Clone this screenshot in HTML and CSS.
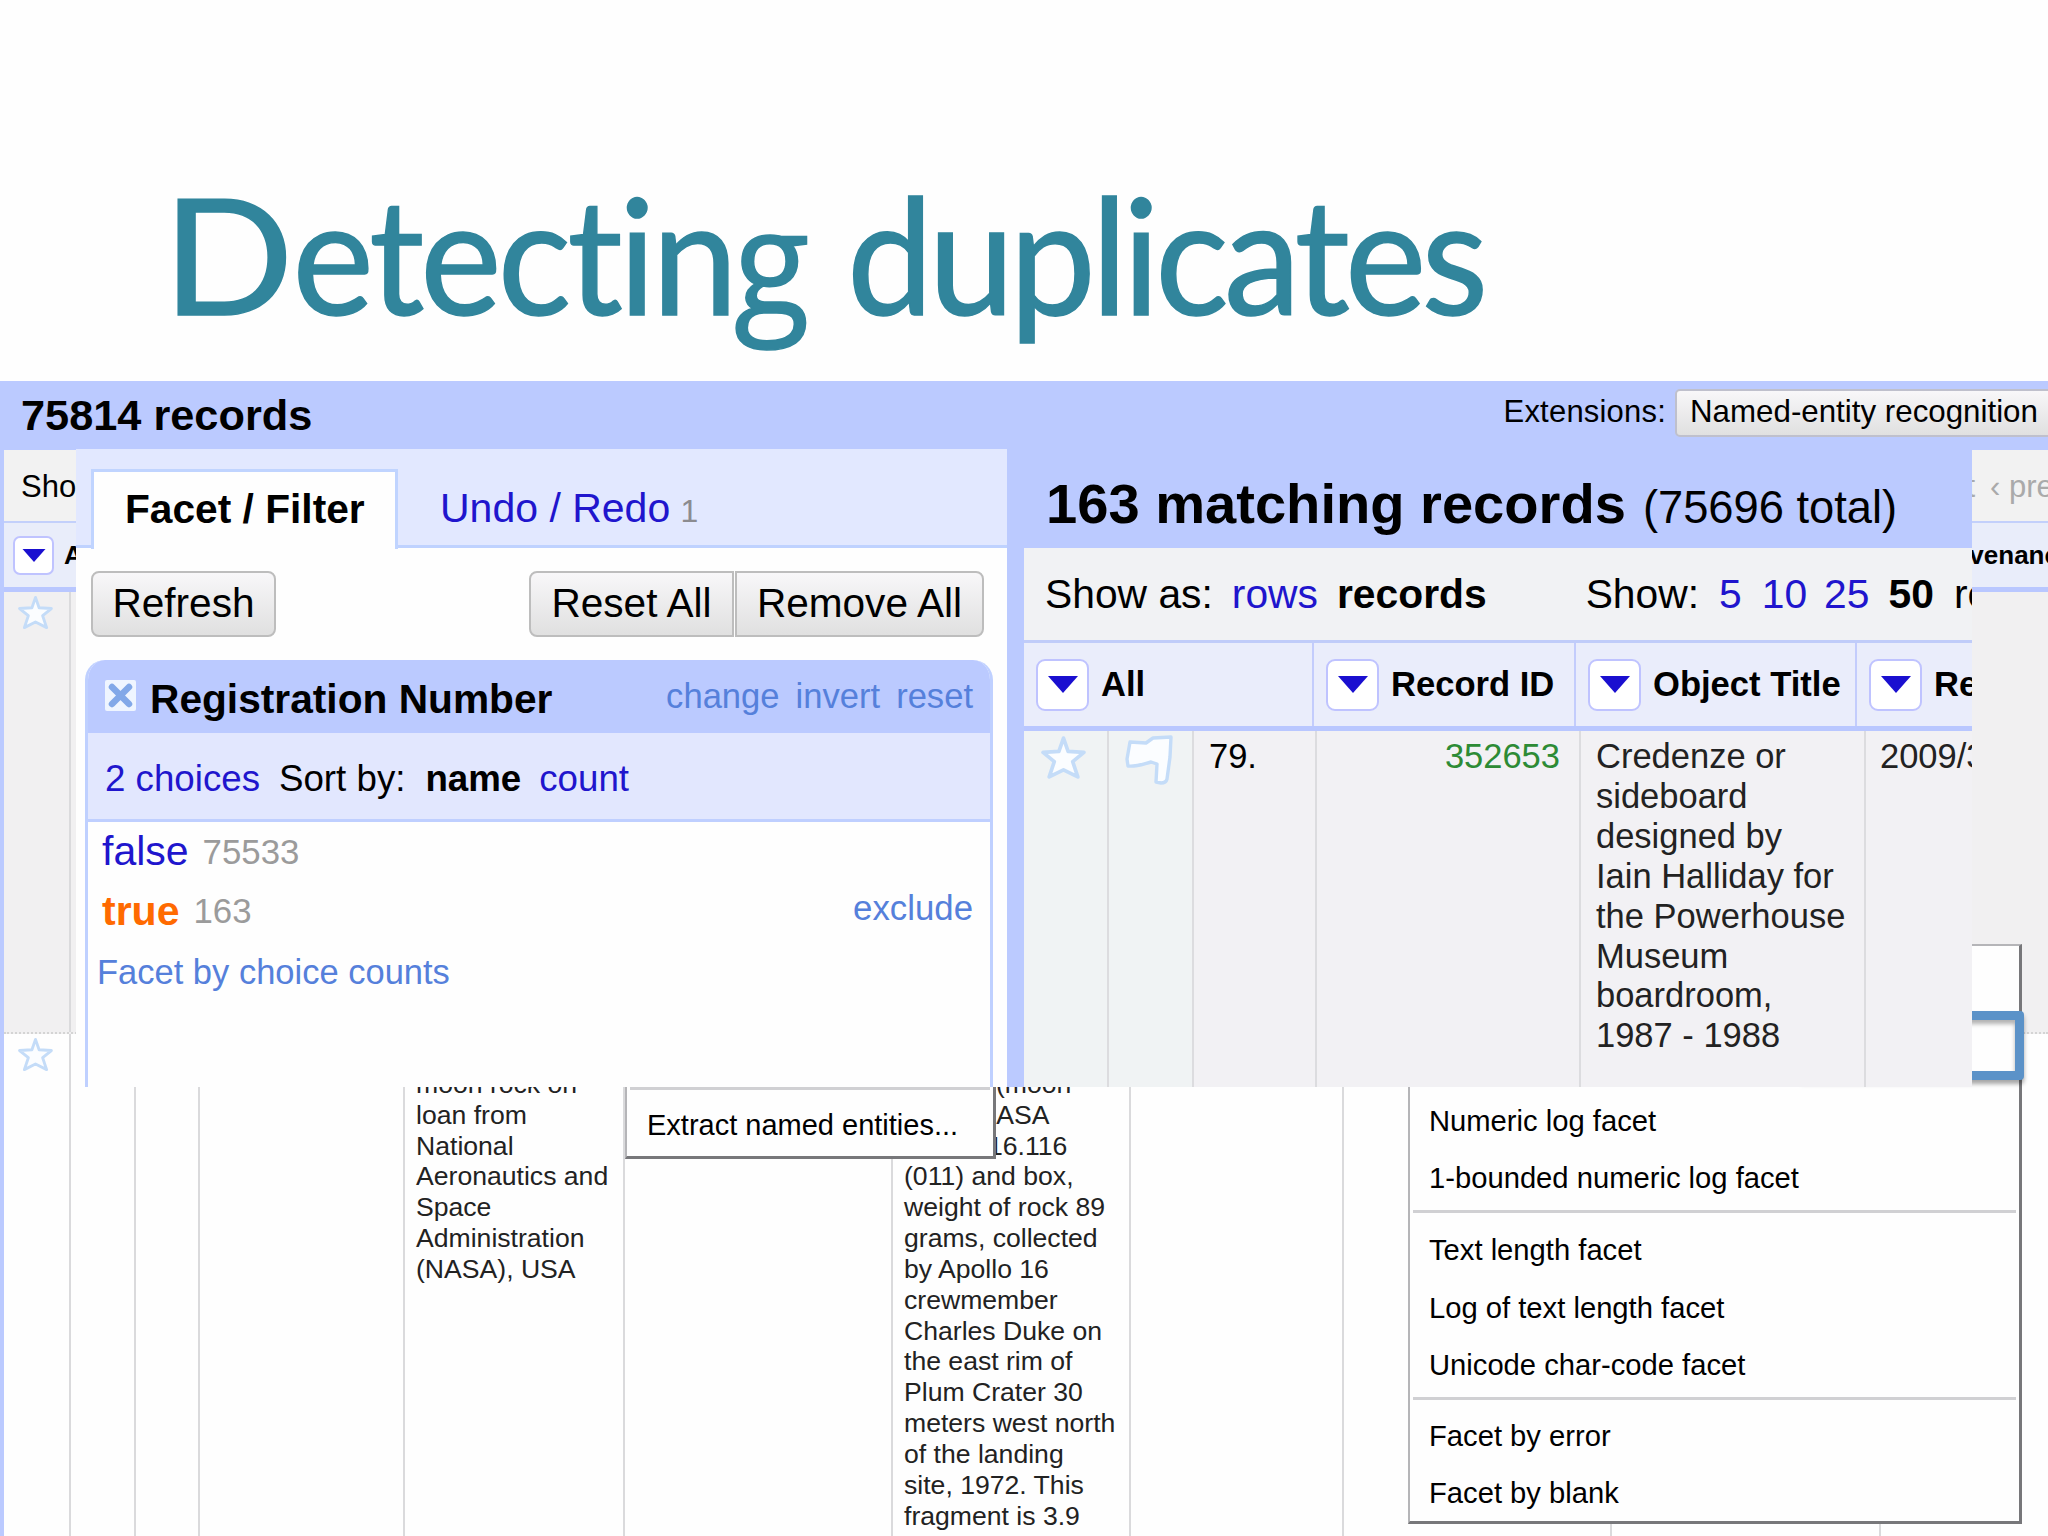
FILE: index.html
```html
<!DOCTYPE html>
<html lang="en">
<head>
<meta charset="utf-8">
<title>Detecting duplicates</title>
<link rel="stylesheet" href="styles.css">
</head>
<body>
<svg class="defs" width="0" height="0">
  <symbol id="star" viewBox="0 0 44 44"><path d="M22 3 L26.5 16 L42 17 L31 26 L36 41 L22 34 L8 41 L13 26 L2 17 L17.5 16 Z" fill="#fbfdff" stroke="#c4dcf8" stroke-width="3.6" stroke-linejoin="round"/></symbol>
  <symbol id="flag" viewBox="0 0 48 50"><path d="M5 7 L21 8 L28 3 L46 2 L45 22 L42 44 Q41 48 36 48 L31 47 L32 29 L26 27 C18 29 12 32 3 31 L2 24 Z" fill="#fbfdff" stroke="#c4dcf8" stroke-width="3.4" stroke-linejoin="round"/></symbol>
  <symbol id="arrow" viewBox="0 0 30 17"><path d="M0 0 H30 L15 17 Z" fill="#1a0fd0"/></symbol>
  <symbol id="close" viewBox="0 0 31 31"><rect width="31" height="31" rx="2" fill="#eff5ff"/><path d="M7 7 L24 24 M24 7 L7 24" stroke="#82a8e8" stroke-width="6.5" stroke-linecap="round"/></symbol>
</svg>
<main class="slide">
  <header class="slide-head"><h1><span class="cap">D</span>etectin<span class="g">g</span> <span class="second">duplicates</span></h1></header>

  <section class="app">
    <div class="topbar">
      <h2>75814 records</h2>
      <div class="ext"><span>Extensions:</span><button>Named-entity recognition</button></div>
    </div>
    <div class="toolbar"><span>Show as:</span><nav><span>« first</span><span class="prev">‹ prev</span></nav></div>
    <div class="cols">
      <div class="col"><i class="dd"><svg><use href="#arrow"/></svg></i>All</div>
      <div class="col last">Provenance</div>
    </div>
    <div class="row odd">
      <div class="cell"><svg class="star"><use href="#star"/></svg></div><div class="fill"></div>
    </div>
    <div class="row grid">
      <div class="cell"><svg class="star"><use href="#star"/></svg></div>
      <div class="cell"></div><div class="cell"></div><div class="cell"></div>
      <div class="cell text">moon rock on<br>loan from<br>National<br>Aeronautics and<br>Space<br>Administration<br>(NASA), USA</div>
      <div class="cell"></div>
      <div class="cell text"><span class="t1">(moon</span><br><span class="t2">NASA</span><br><span class="t3">16.116</span><br>(011) and box,<br>weight of rock 89<br>grams, collected<br>by Apollo 16<br>crewmember<br>Charles Duke on<br>the east rim of<br>Plum Crater 30<br>meters west north<br>of the landing<br>site, 1972. This<br>fragment is 3.9</div>
      <div class="cell"></div><div class="cell"></div><div class="cell"></div><div></div>
    </div>
  </section>

  <div class="menu extract"><hr><p>Extract named entities...</p></div>

  <div class="menu facets">
    <p>Numeric log facet</p><p>1-bounded numeric log facet</p>
    <hr>
    <p>Text length facet</p><p>Log of text length facet</p><p>Unicode char-code facet</p>
    <hr>
    <p>Facet by error</p><p>Facet by blank</p>
  </div>
  <div class="marker"></div>

  <section class="front">
    <aside class="left">
      <div class="tabs"><div class="tab">Facet / Filter</div><div class="undo">Undo / Redo <small>1</small></div></div>
      <div class="buttons"><button class="b-refresh">Refresh</button><button class="b-reset">Reset All</button><button class="b-remove">Remove All</button></div>
      <div class="facet">
        <div class="f-head"><svg class="close"><use href="#close"/></svg><h3>Registration Number</h3><div class="f-links"><a>change</a><a>invert</a><a>reset</a></div></div>
        <div class="f-sort"><a>2 choices</a><span class="sort">Sort by:</span><b>name</b><a>count</a></div>
        <div class="f-body">
          <div class="choice"><a>false</a><span class="n">75533</span></div>
          <div class="choice on"><b>true</b><span class="n">163</span><a class="exclude">exclude</a></div>
          <div class="by-count">Facet by choice counts</div>
        </div>
      </div>
    </aside>
    <div class="right">
      <div class="r-head"><b>163 matching records</b><span>(75696 total)</span></div>
      <div class="r-tool"><span>Show as:</span><a class="rows">rows</a><b class="recs">records</b><span class="show">Show:</span><a class="n5">5</a><a class="n10">10</a><a class="n25">25</a><b class="n50">50</b><span class="rr">records</span></div>
      <div class="r-cols">
        <div><i class="dd"><svg><use href="#arrow"/></svg></i>All</div>
        <div><i class="dd"><svg><use href="#arrow"/></svg></i>Record ID</div>
        <div><i class="dd"><svg><use href="#arrow"/></svg></i>Object Title</div>
        <div><i class="dd"><svg><use href="#arrow"/></svg></i>Registration</div>
      </div>
      <div class="r-row">
        <div class="cool"><svg class="bigstar"><use href="#star"/></svg></div>
        <div class="cool"><svg class="flag"><use href="#flag"/></svg></div>
        <div class="idx">79.</div>
        <div class="id">352653</div>
        <div class="obj">Credenze or<br>sideboard<br>designed by<br>Iain Halliday for<br>the Powerhouse<br>Museum<br>boardroom,<br>1987 - 1988</div>
        <div class="reg">2009/3</div>
      </div>
    </div>
  </section>
</main>
</body>
</html>
```
FILE: styles.css
```css
* { box-sizing: border-box; }
body { margin: 0; background: #fff; font-family: "Liberation Sans", Arial, sans-serif; color: #000; }
h1, h2, h3, p { margin: 0; }
hr { border: 0; margin: 0; }
.defs { position: absolute; }
button { font-family: inherit; color: #000; padding: 0; background: linear-gradient(#f8f7f9, #e0e0e0); border: 2px solid #bdbdbd; white-space: nowrap; }

.slide { position: relative; width: 2048px; height: 1536px; overflow: hidden; display: flex; flex-direction: column; background: #fefefe; }
.slide-head { height: 381px; padding: 153px 0 0 164px; }
h1 { font: 400 162px/200px Lato, sans-serif; color: #31859c; letter-spacing: -4px; word-spacing: 6px; white-space: nowrap; transform: scaleX(.95); transform-origin: 0 0; -webkit-text-stroke: 1.5px #31859c; }
.cap { display: inline-block; transform: scaleX(1.12); transform-origin: 14px 0; margin-right: 16px; }
.g { font-family: "Open Sans", sans-serif; font-size: 146px; line-height: 1px; }
.second { letter-spacing: -4.9px; }

.app { height: 1155px; display: flex; flex-direction: column; background: #fefefe; border-left: 4px solid #bbcaff; }
.topbar { height: 69px; flex: none; display: flex; justify-content: space-between; background: #bbcaff; padding-left: 17px; }
.topbar h2 { font-size: 43.3px; line-height: 69px; }
.ext { display: flex; align-items: flex-start; padding-top: 8px; margin-right: -22px; font-size: 31px; }
.ext span { line-height: 46px; margin-right: 9px; letter-spacing: 0.2px; }
.ext button { width: 395px; height: 48px; border-radius: 5px; border-color: #bfc0cc; font-size: 31.3px; line-height: 41px; text-align: left; padding: 0 0 3px 13px; }
.toolbar { height: 73px; flex: none; display: flex; justify-content: space-between; border-bottom: 2px solid #c3d0fb; background: #f2f2f2; padding-left: 17px; font-size: 31px; line-height: 73px; }
.toolbar nav { display: flex; color: #aaa; white-space: nowrap; }
.toolbar .prev { width: 58px; margin-left: 15px; }
.cols { height: 69px; flex: none; display: flex; justify-content: space-between; background: #e9edfa; border-bottom: 5px solid #b9c7ff; font: bold 26px/66px "Liberation Sans", Arial, sans-serif; }
.col { display: flex; align-items: center; padding-left: 9px; }
.col .dd { width: 41px; height: 39px; border-radius: 7px; margin-right: 10px; }
.col .dd svg { width: 24px; height: 13px; }
.col.last { width: 122px; padding: 0; }
.dd { display: flex; flex: none; align-items: center; justify-content: center; background: #fff; border: 2px solid #bfc3ff; }
.row { display: flex; flex: none; }
.row.odd { height: 442px; background: #f1f0f1; border-bottom: 2px dotted #d4d4d4; }
.row.odd .cell { width: 67px; }
.row.grid { flex: 1; display: grid; grid-template-columns: 67px 65px 64px 205px 220px 268px 238px 213px 268px 269px 1fr; }
.cell { border-right: 2px solid #dadadc; white-space: nowrap; }
.cell .star { display: block; width: 35px; height: 35px; margin: 3px 0 0 14px; }
.text { padding: 35px 0 0 11px; font-size: 26.6px; line-height: 30.83px; color: #222; }
.t1 { padding-left: 92px; }
.t2 { padding-left: 73px; }
.t3 { padding-left: 84px; }

.menu { position: absolute; background: #fefefe; border: 2px solid #b5b5b8; border-right: 3px solid #77777a; border-bottom: 3px solid #77777a; font-size: 29.2px; }
.menu hr { height: 3px; background: #d0d0d3; }
.menu p { white-space: nowrap; }
.extract { left: 625px; top: 1060px; width: 371px; height: 99px; padding: 25px 3px 0; }
.extract p { padding-left: 17px; line-height: 71px; font-size: 29px; }
.facets { left: 1408px; top: 944px; width: 614px; height: 580px; padding: 147px 3px 0 3px; }
.facets p { padding-left: 16px; line-height: 57.2px; }
.facets hr { margin: 3px 0 9px; }
.facets hr + p + p + p + hr { margin: 3px 0 8px; }
.marker { position: absolute; left: 1800px; top: 1011px; width: 224px; height: 69px; border: 9px solid #5b92c8; border-radius: 4px; box-shadow: 0 4px 4px rgba(0,0,0,.35), inset 0 4px 4px rgba(0,0,0,.3); background: #fefefe; }

.front { position: absolute; left: 76px; top: 449px; width: 1896px; height: 638px; overflow: hidden; display: flex; background: #fefefe; }
a { color: #2015cd; }
.left { width: 931px; flex: none; display: flex; flex-direction: column; font-size: 41px; }
.tabs { height: 100px; flex: none; display: flex; align-items: flex-end; background: linear-gradient(#e2e8ff 0 96px, #bfd2ff 96px 99px, #fefefe 99px); padding-left: 15px; }
.tab { width: 307px; height: 80px; border: 3px solid #c0d4ff; border-bottom: 0; background: #fefefe; font-weight: bold; font-size: 40.7px; line-height: 74px; padding: 0 0 0 31px; white-space: nowrap; }
.undo { color: #2015cd; line-height: 76px; margin-left: 42px; white-space: nowrap; }
.undo small { font-size: 32px; color: #8b8b90; margin-left: -1px; }
.buttons { display: flex; padding: 22px 23px 0 15px; }
.buttons button { height: 66px; font-size: 40.6px; line-height: 60px; padding-bottom: 3px; }
.b-refresh { width: 185px; border-radius: 8px; margin-right: auto; }
.b-reset { width: 205px; border-radius: 8px 0 0 8px; margin-right: 1px; }
.b-remove { width: 249px; border-radius: 0 8px 8px 0; }
.facet { flex: 1; margin: 23px 14px 0 9px; border: 3px solid #bfd0ff; border-width: 0 3px; border-radius: 20px 20px 0 0; overflow: hidden; }
.f-head { height: 73px; margin: 0 -3px; background: #bbcaff; display: flex; padding: 0 20px; }
.close { width: 31px; height: 31px; margin: 20px 14px 0 0; }
.f-head h3 { font-size: 40.7px; line-height: 79px; white-space: nowrap; }
.f-links { display: flex; gap: 16px; margin-left: auto; font-size: 34.6px; line-height: 73px; }
.f-links a, .exclude, .by-count { color: #5580db; }
.f-sort { height: 89px; background: #e2e7fe; border-bottom: 3px solid #bfcfff; display: flex; font-size: 36.7px; line-height: 91px; padding-left: 17px; }
.sort { margin: 0 20px 0 19px; }
.f-sort b { margin-right: 18px; }
.choice { height: 59px; display: flex; line-height: 58px; padding-left: 14px; }
.choice.on { line-height: 60px; }
.choice b { color: #ff6a00; }
.n { font-size: 34.8px; color: #9b9b9b; margin-left: 14px; line-height: 60px; }
.exclude { margin-left: auto; margin-right: 17px; font-size: 34.8px; line-height: 53px; }
.by-count { font-size: 34.5px; line-height: 65px; padding-left: 9px; }

.right { flex: 1; min-width: 0; border-left: 17px solid #bbcaff; display: flex; flex-direction: column; white-space: nowrap; }
.r-head { height: 99px; flex: none; background: #bbcaff; display: flex; align-items: baseline; line-height: 109px; padding-left: 22px; }
.r-head b { font-size: 56.1px; }
.r-head span { font-size: 45.3px; margin-left: 17px; }
.r-tool { height: 95px; flex: none; display: flex; background: #f1f2f4; border-bottom: 3px solid #c0ccf9; font-size: 40.8px; line-height: 92px; padding-left: 21px; }
.rows { margin-left: 19px; }
.recs { margin-left: 19px; }
.show { margin-left: 99px; }
.n5 { margin-left: 20px; }
.n10 { margin-left: 20px; }
.n25 { margin-left: 17px; }
.n50 { margin-left: 19px; }
.rr { margin-left: 20px; }
.r-cols { height: 88px; flex: none; display: grid; grid-template-columns: 290px 262px 281px 300px; background: #eaedfb; border-bottom: 5px solid #b9c7ff; font: bold 34.6px/83px "Liberation Sans", Arial, sans-serif; }
.r-cols > div { display: flex; align-items: center; padding-left: 12px; border-right: 2px solid #c3ccfc; }
.r-cols .dd { width: 53px; height: 52px; border-radius: 9px; margin-right: 12px; }
.r-cols svg { width: 30px; height: 17px; }
.r-row { flex: 1; display: grid; grid-template-columns: 85px 85px 123px 264px 285px 200px; background: #f2f1f4; font-size: 34.5px; line-height: 39.9px; color: #222; }
.r-row > div { border-right: 2px solid #dcdcdf; padding-top: 6px; }
.r-row .cool { background: #f0f3f4; padding-top: 4px; }
.bigstar { display: block; width: 45px; height: 45px; margin-left: 17px; }
.flag { display: block; width: 48px; height: 50px; margin-left: 16px; }
.idx { padding-left: 15px; color: #000; }
.id { text-align: right; padding-right: 19px; color: #2d8b35; }
.obj { padding-left: 15px; }
.reg { padding-left: 14px; }
```
